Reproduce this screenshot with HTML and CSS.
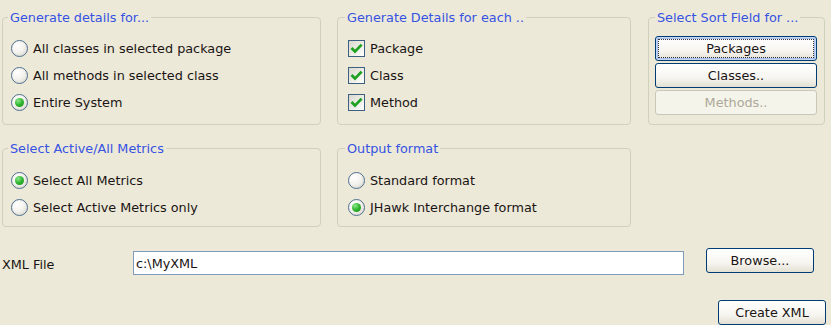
FILE: index.html
```html
<!DOCTYPE html>
<html lang="en">
<head>
    <meta charset="UTF-8">
    <title>Create XML</title>
    <link rel="stylesheet" href="styles.css">
</head>
<body>
    <div class="panel">
        <div class="row">
            <fieldset class="group group-wide">
                <legend>Generate details for...</legend>
                <label class="option"><span class="radio"></span>All classes in selected package</label>
                <label class="option"><span class="radio"></span>All methods in selected class</label>
                <label class="option"><span class="radio checked"></span>Entire System</label>
            </fieldset>
            <fieldset class="group group-mid">
                <legend>Generate Details for each ..</legend>
                <label class="option"><span class="check"><svg viewBox="0 0 15 15"><path d="M2.5 7 L6 10.6 L12.6 3.6" /></svg></span>Package</label>
                <label class="option"><span class="check"><svg viewBox="0 0 15 15"><path d="M2.5 7 L6 10.6 L12.6 3.6" /></svg></span>Class</label>
                <label class="option"><span class="check"><svg viewBox="0 0 15 15"><path d="M2.5 7 L6 10.6 L12.6 3.6" /></svg></span>Method</label>
            </fieldset>
            <fieldset class="group group-sort">
                <legend>Select Sort Field for ...</legend>
                <div class="button-stack">
                    <button class="btn default">Packages</button>
                    <button class="btn">Classes..</button>
                    <button class="btn" disabled>Methods..</button>
                </div>
            </fieldset>
        </div>
        <div class="row row-second">
            <fieldset class="group group-wide group-short">
                <legend>Select Active/All Metrics</legend>
                <label class="option"><span class="radio checked"></span>Select All Metrics</label>
                <label class="option"><span class="radio"></span>Select Active Metrics only</label>
            </fieldset>
            <fieldset class="group group-mid group-short">
                <legend>Output format</legend>
                <label class="option"><span class="radio"></span>Standard format</label>
                <label class="option"><span class="radio checked"></span>JHawk Interchange format</label>
            </fieldset>
        </div>
        <div class="file-row">
            <span class="file-label">XML File</span>
            <input class="file-input" type="text" value="c:\MyXML">
            <button class="btn browse">Browse...</button>
        </div>
        <div class="action-row">
            <button class="btn create">Create XML</button>
        </div>
    </div>
</body>
</html>
```

FILE: styles.css
```css
html, body {
    margin: 0;
    padding: 0;
    background-color: #ece9d8;
}
body {
    font-family: "DejaVu Sans", Verdana, sans-serif;
    font-size: 12.8px;
    color: #1a1414;
    width: 831px;
    height: 325px;
    overflow: hidden;
}
.panel {
    padding: 10px 0 0 2px;
}
.row {
    display: flex;
    align-items: stretch;
}
.row-second {
    margin-top: 16px;
}
.group {
    margin: 0;
    border: 1px solid #d0d0bf;
    border-radius: 4px;
    padding: 10px 8px 8px 8px;
    min-width: 0;
    box-sizing: border-box;
}
.group legend {
    color: #3652e2;
    font-size: 12.8px;
    line-height: 15px;
    padding: 0 2px;
    margin-left: -3px;
}
.group-wide {
    width: 319px;
}
.group-mid {
    width: 294px;
    margin-left: 16px;
    padding-left: 10px;
}
.group-sort {
    width: 177px;
    margin-left: 17px;
    padding: 11px 7px 8px 6px;
}
.group-sort legend {
    margin-left: 0;
}
.group-short {
    padding-top: 11px;
    padding-bottom: 5px;
}
.option {
    display: flex;
    align-items: center;
    height: 27px;
    line-height: 15px;
}
.radio {
    width: 17px;
    height: 17px;
    box-sizing: border-box;
    border: 1px solid #4f6f90;
    border-radius: 50%;
    background: radial-gradient(circle at 35% 30%, #ffffff 0%, #f4f3ee 45%, #d2d0c6 100%);
    margin-right: 5px;
    display: flex;
    align-items: center;
    justify-content: center;
    flex: none;
}
.radio.checked::after {
    content: "";
    width: 9px;
    height: 9px;
    border-radius: 50%;
    background: radial-gradient(circle at 35% 30%, #8be88b 0%, #2fb52f 50%, #118a11 100%);
}
.check {
    width: 17px;
    height: 17px;
    box-sizing: border-box;
    border: 1px solid #3d5f82;
    background: linear-gradient(135deg, #d8d8ce 0%, #f0f0ea 60%, #ffffff 100%);
    margin-right: 5px;
    display: flex;
    align-items: center;
    justify-content: center;
    flex: none;
}
.check svg {
    width: 15px;
    height: 15px;
}
.check path {
    fill: none;
    stroke: #21a121;
    stroke-width: 2.8;
}
.button-stack {
    display: flex;
    flex-direction: column;
    gap: 2px;
}
.btn {
    font-family: "DejaVu Sans", Verdana, sans-serif;
    font-size: 12.8px;
    color: #1a1414;
    height: 25px;
    padding: 0;
    border: 1px solid #003c74;
    border-radius: 3px;
    background: linear-gradient(#ffffff 0%, #f6f5f0 60%, #e3e0d3 100%);
    position: relative;
}
.btn.default {
    box-shadow: inset 0 0 0 1px #c5d6f5, inset 0 0 0 2px #a5bfee;
}
.btn.default::after {
    content: "";
    position: absolute;
    top: 2px;
    left: 2px;
    right: 2px;
    bottom: 2px;
    border: 1px dotted #333;
}
.btn:disabled {
    border-color: #c9c7ba;
    color: #aca899;
    background: #f5f4ea;
}
.file-row {
    display: flex;
    align-items: flex-start;
    margin-top: 21px;
}
.file-label {
    width: 131px;
    margin-top: 9px;
    line-height: 15px;
}
.file-input {
    width: 551px;
    height: 24px;
    box-sizing: border-box;
    margin: 3px 0 0 0;
    border: 1px solid #7f9db9;
    padding: 0 2px;
    font-family: "DejaVu Sans", Verdana, sans-serif;
    font-size: 12.8px;
    color: #1a1414;
    background: #fff;
}
.browse {
    width: 108px;
    margin-left: 22px;
}
.action-row {
    display: flex;
    justify-content: flex-end;
    margin-top: 25px;
    padding-right: 5px;
}
.create {
    width: 108px;
}
```
